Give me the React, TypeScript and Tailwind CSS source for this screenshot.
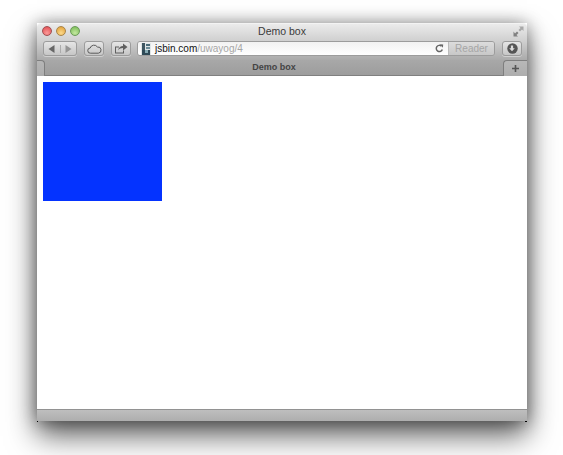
// Safari window with a single blue box in the page.
const font = "font-['Liberation_Sans',Arial,sans-serif]"

function Lights() {
  return (
    <div className="flex gap-[4px]">
      <span className="w-[10px] h-[10px] rounded-full border border-[#a04f52] bg-[radial-gradient(circle_at_50%_75%,#fb9a98,#e0474c)]" />
      <span className="w-[10px] h-[10px] rounded-full border border-[#a8854a] bg-[radial-gradient(circle_at_50%_75%,#fbd98c,#e09c30)]" />
      <span className="w-[10px] h-[10px] rounded-full border border-[#6a9a58] bg-[radial-gradient(circle_at_50%_75%,#c4e8a0,#74b850)]" />
    </div>
  )
}

function Favicon() {
  return (
    <svg width="10" height="12" viewBox="0 0 10 12" className="shrink-0">
      <rect x="0" y="0" width="10" height="12" fill="#dfe5e6" />
      <rect x="1" y="0" width="3" height="7" fill="#3f5661" />
      <rect x="5" y="1" width="4" height="2" fill="#4b6c7a" />
      <rect x="5" y="4" width="4" height="2" fill="#6d8d99" />
      <rect x="1" y="7" width="8" height="5" fill="#2f4a57" />
      <rect x="4" y="7" width="3" height="3" fill="#86aab3" />
    </svg>
  )
}

const btn =
  "flex items-center justify-center h-[15px] rounded-[3px] border border-[#9c9c9c] bg-gradient-to-b from-[#e6e6e6] to-[#c6c6c6] shadow-[0_1px_0_rgba(255,255,255,0.4)]"

export default function App() {
  return (
    <div className={`w-[563px] h-[455px] bg-white pt-[23px] pl-[37px] overflow-hidden ${font}`}>
      <div className="relative w-[490px] h-[398px] flex flex-col shadow-[0_15px_28px_rgba(0,0,0,0.6),0_1px_16px_rgba(0,0,0,0.42)]">
        <div className="h-[37px] flex flex-col rounded-t-[4px] bg-gradient-to-b from-[#ebebeb] via-[#cecece] to-[#aaaaaa] border-t border-[#f3f3f3]">
          <div className="relative h-[16px] flex items-center justify-center">
            <div className="absolute left-[5px] top-[2px]">
              <Lights />
            </div>
            <span className="text-[10.5px] text-[#3a3a3a] leading-none -mt-[2px]">Demo box</span>
            <svg width="11" height="11" viewBox="0 0 11 11" className="absolute right-[3px] top-[2px]">
              <path d="M6 0.500h4.500V5L9 3.500l-2 2L5.500 4l2-2z" fill="#a8a8a8" />
              <path d="M0.500 5.500v5H5L3.500 9l2-2L4 5.500l-2 2z" fill="#808080" />
            </svg>
          </div>
          <div className="flex items-center pl-[6px] pr-[5px] mt-[1px]">
            <div className={`${btn} w-[34px]`}>
              <span className="flex-1 flex justify-center border-r border-[#acacac]">
                <svg width="7" height="8" viewBox="0 0 7 8"><path d="M6.500 0v8L0.500 4z" fill="#666" /></svg>
              </span>
              <span className="flex-1 flex justify-center">
                <svg width="7" height="8" viewBox="0 0 7 8"><path d="M0.500 0v8l6-4z" fill="#949494" /></svg>
              </span>
            </div>
            <div className={`${btn} w-[20px] ml-[7px]`}>
              <svg width="15" height="10" viewBox="0 0 15 10">
                <path d="M3.500 9.200a2.600 2.600 0 0 1-.3-5.200A4 4 0 0 1 10.400 3a3.100 3.100 0 0 1 1 6.200z" fill="none" stroke="#5a5a5a" strokeWidth="1" />
              </svg>
            </div>
            <div className={`${btn} w-[20px] ml-[7px]`}>
              <svg width="14" height="11" viewBox="0 0 14 11">
                <path d="M1 3.500h4v1H2v5h7V7.500h1v3H1z" fill="#5f5f5f" />
                <path d="M4 7.500C4.500 4.500 6.500 3 9 3V0.500L13.500 4 9 7.500V5C7 5 5 5.700 4 7.500z" fill="#5f5f5f" />
              </svg>
            </div>
            <div className="flex items-stretch h-[15px] ml-[6px] w-[358px] rounded-[3px] border border-[#9c9c9c] overflow-hidden">
              <div className="flex-1 flex items-center bg-gradient-to-b from-[#f2f2f2] to-white pl-[3px] pr-[4px]">
                <Favicon />
                <span className="ml-[4px] text-[10px] leading-none text-[#111]">jsbin.com</span>
                <span className="text-[10px] leading-none text-[#a6a6a6]">/uwayog/4</span>
                <svg width="9" height="9" viewBox="0 0 9 9" className="ml-auto">
                  <path d="M7.300 5.500A3.100 3.100 0 1 1 6.500 2.200" fill="none" stroke="#666" strokeWidth="1.500" />
                  <path d="M5 0.300l3.200 0.300-0.300 3.200z" fill="#666" />
                </svg>
              </div>
              <div className="w-[46px] flex items-center justify-center border-l border-[#bbbbbb] bg-gradient-to-b from-[#dcdcdc] to-[#c8c8c8] text-[10px] leading-none text-[#a6a6a6]">
                Reader
              </div>
            </div>
            <div className={`${btn} w-[20px] ml-[7px]`}>
              <svg width="11" height="11" viewBox="0 0 11 11">
                <circle cx="5.500" cy="5.500" r="5.200" fill="#555" />
                <path d="M3.900 2.500h2.200v2.700h1.700L5 8.300 2.200 5.200h1.700z" fill="#dcdcdc" />
              </svg>
            </div>
          </div>
        </div>

        <div className="h-[16px] flex items-stretch bg-gradient-to-b from-[#a8a8a8] to-[#9c9c9c]">
          <div className="w-[8px] rounded-tr-[4px] bg-gradient-to-b from-[#b6b6b6] to-[#adadad] border-t border-r border-[#7e7e7e]" />
          <div className="flex-1 flex items-center justify-center text-[9px] font-bold leading-none text-[#444] border-b border-[#808080]">
            Demo box
          </div>
          <div className="w-[24px] flex items-center justify-center rounded-tl-[4px] bg-gradient-to-b from-[#b8b8b8] to-[#adadad] border-t border-l border-[#7e7e7e]">
            <svg width="7" height="7" viewBox="0 0 7 7">
              <path d="M2.700 0h1.600v2.700H7v1.600H4.300V7H2.700V4.300H0V2.700h2.700z" fill="#555" />
            </svg>
          </div>
        </div>

        <div className="flex-1 bg-white pl-[6px] pt-[6px]">
          <div className="w-[119px] h-[119px] bg-[#0433ff]" />
        </div>

        <div className="h-[12px] bg-gradient-to-b from-[#bebebe] to-[#aeaeae] border-t border-[#929292]" />

        <span className="absolute left-0 bottom-[-1px] w-[1px] h-[1px] bg-black" />
        <span className="absolute right-0 bottom-[-1px] w-[2px] h-[1px] bg-black" />
      </div>
    </div>
  )
}
